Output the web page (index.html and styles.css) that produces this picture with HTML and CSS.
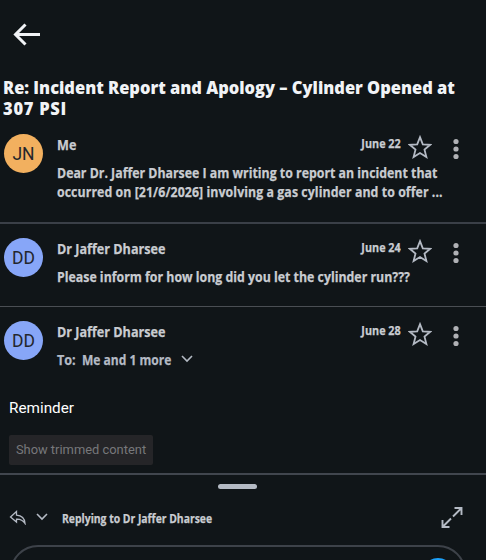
FILE: index.html
```
<!DOCTYPE html>
<html lang="en">
<head>
  <meta charset="UTF-8">
  <title>Re: Incident Report and Apology</title>
  <link rel="stylesheet" href="styles.css">
</head>
<body>
  <svg class="defs" width="0" height="0">
    <symbol id="star" viewBox="0 0 24 24">
      <path d="M12 2.200l2.800 7.100 7.400.5-5.700 4.800 1.900 7.400-6.400-4-6.400 4 1.900-7.400-5.700-4.800 7.400-.5z"/>
    </symbol>
    <symbol id="dots" viewBox="0 0 6 22">
      <circle cx="3" cy="3.500" r="2.600"/>
      <circle cx="3" cy="11" r="2.600"/>
      <circle cx="3" cy="18.500" r="2.600"/>
    </symbol>
    <symbol id="chevron" viewBox="0 0 12 8">
      <path d="M1 1l5 5 5-5"/>
    </symbol>
  </svg>

  <div class="screen">
    <header class="topbar">
      <svg class="back" viewBox="0 0 28 24"><path d="M12.500 2.500L2.500 12.500l10 10M2.500 12.500H27"/></svg>
    </header>
    <h1>Re: Incident Report and Apology – Cylinder Opened at<br><span class="psi">307 PSI</span></h1>

    <div class="mail first">
      <div class="avatar orange">JN</div>
      <div class="content">
        <div class="sender">Me</div>
        <div class="preview">Dear Dr. Jaffer Dharsee I am writing to report an incident that<br><span class="wide">occurred on [21/6/2026] involving a gas cylinder and to offer ...</span></div>
      </div>
      <div class="meta">
        <span class="date">June 22</span>
        <svg class="star"><use href="#star"/></svg>
        <svg class="dots"><use href="#dots"/></svg>
      </div>
    </div>

    <div class="mail second">
      <div class="avatar blue">DD</div>
      <div class="content">
        <div class="sender">Dr Jaffer Dharsee</div>
        <div class="preview">Please inform for how long did you let the cylinder run???</div>
      </div>
      <div class="meta">
        <span class="date">June 24</span>
        <svg class="star"><use href="#star"/></svg>
        <svg class="dots"><use href="#dots"/></svg>
      </div>
    </div>

    <div class="mail third">
      <div class="avatar blue">DD</div>
      <div class="content">
        <div class="sender">Dr Jaffer Dharsee</div>
        <div class="recipients">
          <span class="to">To:</span>
          <span class="names">Me and 1 more</span>
          <svg class="chevron"><use href="#chevron"/></svg>
        </div>
      </div>
      <div class="meta">
        <span class="date">June 28</span>
        <svg class="star"><use href="#star"/></svg>
        <svg class="dots"><use href="#dots"/></svg>
      </div>
    </div>

    <div class="message">
      <p>Reminder</p>
      <button class="trimmed">Show trimmed content</button>
    </div>

    <div class="reply">
      <div class="handle"></div>
      <div class="reply-bar">
        <svg class="reply-icon" viewBox="0 0 18 15"><path d="M7.500 1.500L1.500 7l6 5V9.200c4-.2 6.500 1.300 8.500 4.300-.3-4.700-3.500-8-8.500-8.300z"/></svg>
        <svg class="chevron"><use href="#chevron"/></svg>
        <span class="replying">Replying to Dr Jaffer Dharsee</span>
        <svg class="expand" viewBox="0 0 22 22"><path d="M13.500 2h7v7M20 2.500l-8 8M8.500 21h-7v-7M2 20.500l8-8"/></svg>
      </div>
      <div class="compose"><div class="send"></div></div>
    </div>
  </div>
</body>
</html>
```
FILE: styles.css
```
* {
  box-sizing: border-box;
}
body {
  margin: 0;
  background: #101518;
  color: #c9ccd1;
  font-family: "Open Sans", "Noto Sans", sans-serif;
}
svg {
  display: block;
  flex: none;
  fill: none;
  stroke: #b4bac4;
}
.defs {
  position: absolute;
}
.screen {
  width: 486px;
  height: 560px;
  overflow: hidden;
  display: flex;
  flex-direction: column;
}
.topbar {
  height: 77px;
  flex: none;
  padding: 22px 0 0 13px;
}
.back {
  width: 28px;
  height: 24px;
  stroke: #f1f3f6;
  stroke-width: 3;
}
h1 {
  margin: 0 0 7px 3px;
  height: 41px;
  flex: none;
  font-size: 18px;
  font-weight: 800;
  line-height: 20.5px;
  color: #f1f3f6;
  white-space: nowrap;
  transform: scaleX(.915);
  transform-origin: left;
}
.psi {
  letter-spacing: .8px;
}
.mail {
  display: flex;
  flex: none;
  padding-left: 4px;
}
.first {
  height: 99px;
  padding-top: 9px;
  border-bottom: 2px solid #3a3f47;
}
.second {
  height: 83px;
  padding-top: 14px;
  border-bottom: 1px solid #4a4e53;
}
.third {
  height: 83px;
  padding-top: 14px;
}
.avatar {
  width: 39px;
  height: 39px;
  flex: none;
  border-radius: 50%;
  font: 17.5px/40px Roboto, sans-serif;
  text-align: center;
  color: #24262c;
}
.orange {
  background: #f2b05f;
}
.blue {
  background: #87a6f8;
}
.content {
  width: 300px;
  margin-left: 14px;
  font-size: 14px;
  font-weight: 700;
  line-height: 19px;
  white-space: nowrap;
  -webkit-text-stroke: .25px;
}
.content svg {
  -webkit-text-stroke: 0;
}
.sender {
  margin-top: 1px;
  height: 28px;
  transform: scaleX(.9);
  transform-origin: left;
}
.preview {
  transform: scaleX(.881);
  transform-origin: left;
}
.wide {
  letter-spacing: .08px;
}
.recipients {
  display: flex;
  color: #b4bac4;
}
.to {
  width: 25px;
  transform: scaleX(.9);
  transform-origin: left;
}
.names {
  width: 90px;
  transform: scaleX(.86);
  transform-origin: left;
}
.recipients .chevron {
  margin: 5px 0 0 9px;
}
.chevron {
  width: 12px;
  height: 8px;
  stroke-width: 1.6;
}
.meta {
  display: flex;
  margin-left: auto;
  padding-right: 27px;
}
.date {
  margin-right: 7px;
  height: 20px;
  font-size: 12px;
  font-weight: 700;
  line-height: 20px;
  transform: scaleX(.9);
  transform-origin: right;
  -webkit-text-stroke: .25px;
}
.star {
  width: 24px;
  height: 24px;
  margin-top: 1px;
  stroke-width: 1.8;
}
.dots {
  width: 6px;
  height: 22px;
  margin: 4px 0 0 21px;
  fill: #b0b1b5;
  stroke: none;
}
.message {
  height: 83px;
  flex: none;
  padding: 8px 0 0 9px;
  font-family: Roboto, sans-serif;
}
.message p {
  margin: 0;
  font-size: 15.3px;
  line-height: 20px;
  color: #fff;
}
.trimmed {
  display: block;
  width: 144px;
  height: 30px;
  margin-top: 17px;
  padding: 0 0 1px;
  border: none;
  border-radius: 2px;
  background: #252528;
  color: #77787b;
  font: 12.9px Roboto, sans-serif;
  white-space: nowrap;
}
.reply {
  flex: none;
  height: 120px;
  border-top: 2px solid #41464e;
}
.handle {
  width: 39px;
  height: 5px;
  margin: 9px 0 0 218px;
  border-radius: 3px;
  background: #b4bac4;
}
.reply-bar {
  display: flex;
  align-items: center;
  height: 56px;
  padding: 0 23px 0 9px;
}
.reply-icon {
  width: 18px;
  height: 15px;
  stroke-width: 1.3;
}
.reply-bar .chevron {
  margin-left: 9px;
}
.replying {
  margin: 2px 0 0 14px;
  font-size: 12px;
  font-weight: 700;
  white-space: nowrap;
  transform: scaleX(.865);
  transform-origin: left;
  -webkit-text-stroke: .25px;
}
.expand {
  width: 22px;
  height: 22px;
  margin-left: auto;
  stroke-width: 1.9;
}
.compose {
  width: 456px;
  height: 60px;
  margin: 0 0 0 10px;
  padding: 11px 0 0 410px;
  border: 2px solid #3d4249;
  border-radius: 28px;
}
.send {
  width: 32px;
  height: 32px;
  border-radius: 50%;
  background: #1da1f9;
}
```
